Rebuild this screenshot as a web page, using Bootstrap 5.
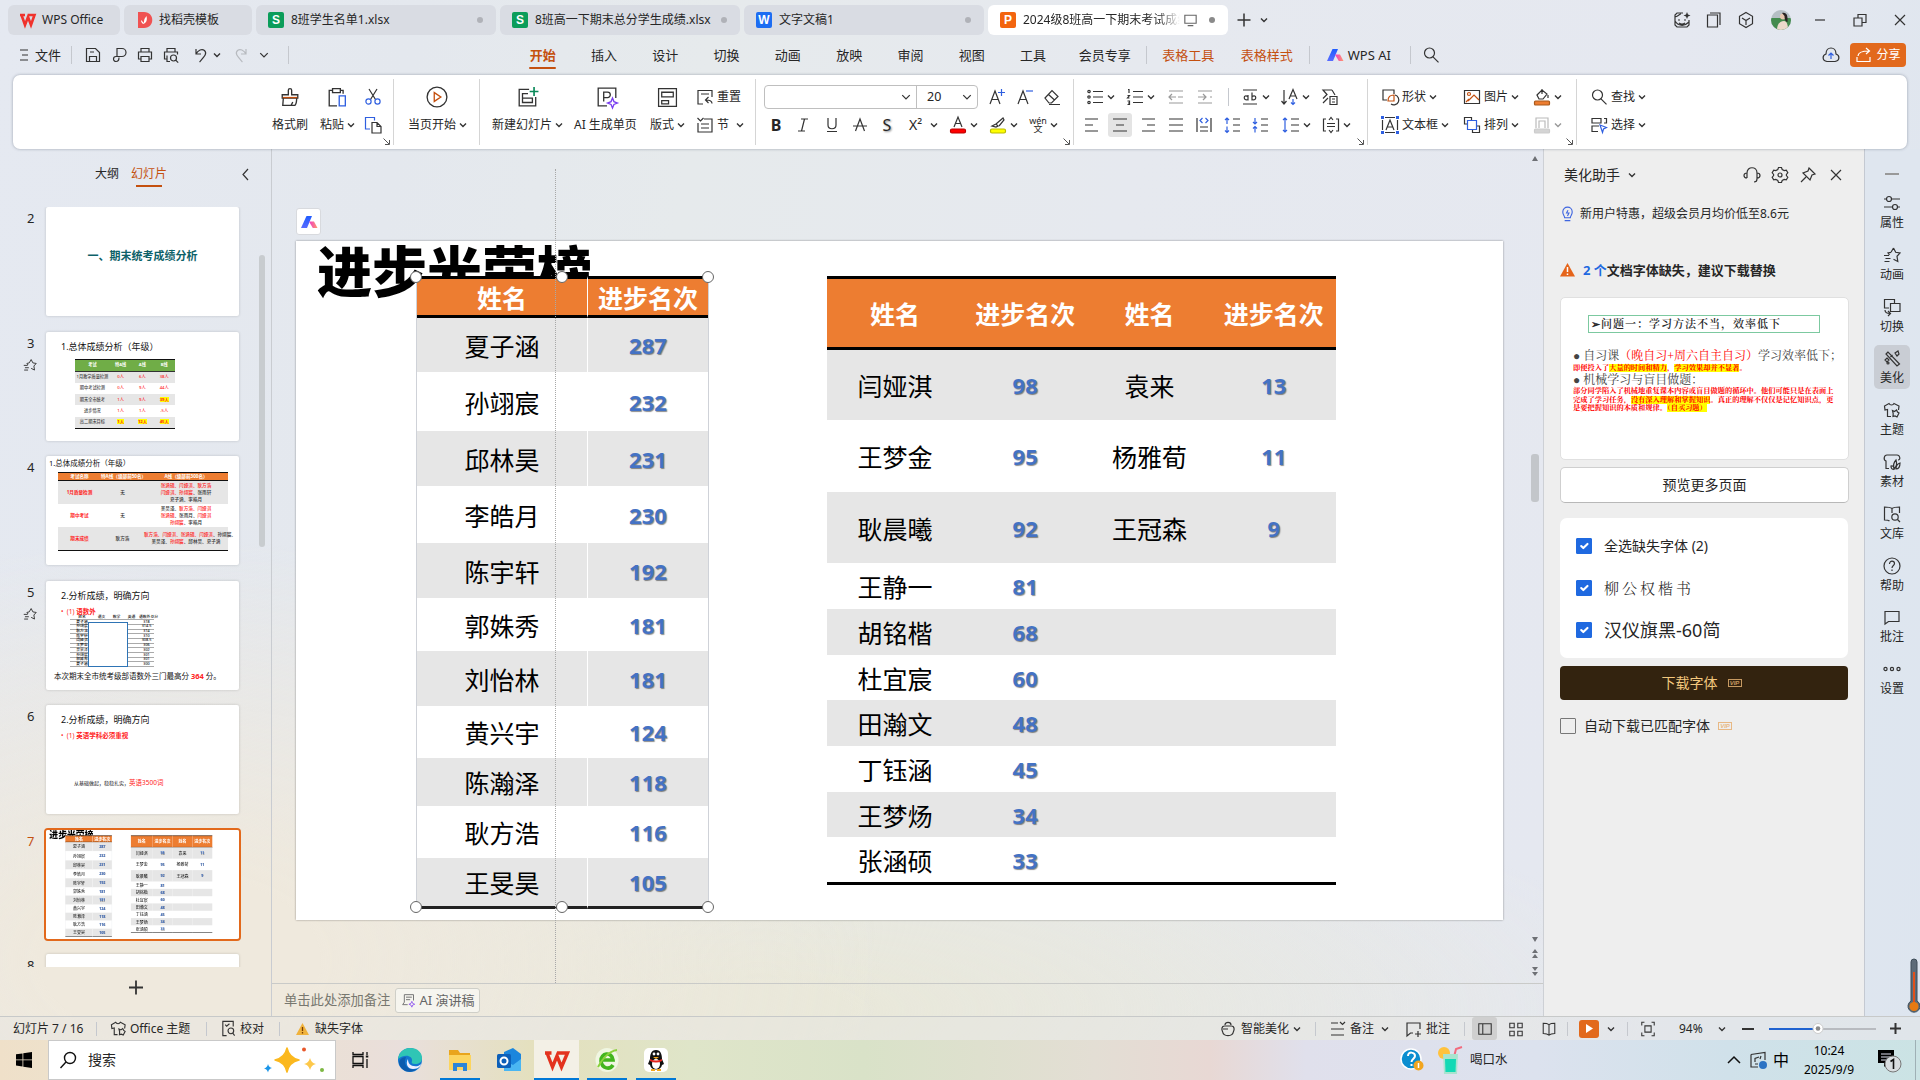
<!DOCTYPE html>
<html lang="zh-CN">
<head>
<meta charset="utf-8">
<title>WPS Office</title>
<link rel="stylesheet" href="https://cdn.jsdelivr.net/npm/bootstrap@5.3.0/dist/css/bootstrap.min.css">
<style>
:root{--acc:#c4500f;--org:#e2691c;--ink:#262626}
html,body{height:100%;overflow:hidden}
body{font:12px/16px "Noto Sans","Noto Sans CJK SC",sans-serif;color:var(--ink);width:1920px;height:1080px;
background:radial-gradient(700px 420px at 180px 960px,#efe9dd 20%,rgba(238,232,220,0) 100%),radial-gradient(900px 260px at 760px 1010px,#e9e8da 10%,rgba(232,232,218,0) 100%),linear-gradient(100deg,#e5e9f1 0,#e4e8ee 20%,#e6eaec 34%,#e6e9ef 55%,#e5e8f0 80%,#dde5ee 100%)}
svg.ic{width:18px;height:18px;fill:none;stroke:#333;stroke-width:1.2;flex:none;display:block;overflow:visible}
svg.ic.s15{width:15px;height:15px}svg.ic.s16{width:16px}svg.ic.s17{width:17px;height:17px}
svg.ic.s20{width:20px;height:20px}svg.ic.s21{width:21px;height:21px}svg.ic.s22{width:22px;height:22px}
svg.chev{width:8px;height:8px;fill:none;stroke:#333;stroke-width:1.4;flex:none;display:block}
svg.chev.big{width:10px;height:10px;stroke-width:1}
.slot{display:flex;align-items:center;justify-content:center;flex:none;white-space:nowrap}
.slot.st{justify-content:flex-start}
.vsep{width:1px;height:18px;background:#c5c8ce;flex:none}
.g3{gap:3px}
.clr-acc{color:var(--acc)}
/* title tabs */
.titlebar{height:40px;padding:5px 0 5px 8px}
.doctab{height:30px;border-radius:6px;background:#d9dce3;padding:0 12px;gap:7px;white-space:nowrap;overflow:hidden;width:240px;flex:none}
.doctab.home{width:112px;gap:5px;padding-left:11px}.doctab.shell{width:128px;padding-left:13px;gap:4px}
.doctab.on{background:#fff}
.doctab .dot{width:6px;height:6px;border-radius:50%;background:#b0b2b8;margin-left:auto;margin-right:1px;flex:none}
.doctab.on .dot{background:#8a8a8a;margin-left:3px}
.doctab .mon{margin-left:-5px;stroke:#666;width:17px}
.fade-end{width:157px;overflow:hidden;flex:none;-webkit-mask-image:linear-gradient(90deg,#000 86%,transparent)}
.appbadge{width:16px;height:16px;border-radius:2px;color:#fff;font:bold 12px/16px "Liberation Sans",sans-serif;text-align:center;flex:none}
.bg-s{background:#0b9d5a}.bg-w{background:#1d6df2}.bg-p{background:#f3650f}
/* menu */
.menubar{height:35px;font-size:13px;padding-bottom:5px}
.file-sep{margin:0 8px 0 9px}
.quick-more{width:28px;margin-right:10px}
.mtabs{margin-left:223px}
.mtab{width:61.3px;position:relative;text-align:center}
.mtab.on{color:var(--acc);font-weight:700}
.mtab.on::after{content:"";position:absolute;left:17px;right:17px;bottom:-6px;height:2px;background:var(--acc);border-radius:1px}
.vip-tab{width:82px}.tool-tab{width:83px}.style-tab{width:74px}
.ai-sep{margin:0 16px 0 5px}.find-sep{margin-left:19px}
.share{width:56px;height:24px;border-radius:4px;background:var(--org);color:#fff;font-size:12px;gap:3px;margin-right:-2px}
.share svg.ic{stroke:#fff}
/* ribbon */
.ribbon{margin:0 13px;height:74px;background:#fff;border-radius:7px;box-shadow:0 0 3px rgba(60,70,90,.45);padding-left:255px;position:relative;z-index:5}
.rgroup{height:66px;margin-top:4px;padding-top:4px;border-right:1px solid #d5d5d5;position:relative;display:flex;flex:none;white-space:nowrap}
.rgroup:last-child{border:0}
.rg-clip{width:126px}.rg-play{width:86px;padding-left:14px}.rg-slide{width:276px;padding-left:12px}.rg-font{width:318px;padding-left:8px}.rg-para{width:294px;padding-left:4px}.rg-draw{width:209px;padding-left:13px}.rg-find{padding-left:13px}
.col44{width:44px}.col-paste{width:48px;padding-left:8px}.col-paste .rrow:first-child{padding-left:7px}
.col82{width:82px}.col76{width:76px}.col46{width:46px}.col70{width:70px}
.in18{padding-left:18px}.in25{padding-left:25px}.in22{padding-left:22px}.in7{padding-left:7px}
.rrow{height:28px;display:flex;align-items:center}
.rgroup .launch{position:absolute;right:3px;bottom:0;width:7px;height:7px;stroke:#555;fill:none;stroke-width:1}
.pairbox{width:40px;display:flex;align-items:center;gap:3px;flex:none}
.pairbox.sup{margin-left:9px}
.glyph{width:18px;font-size:14px}.glyph.py{font-size:9px;line-height:8px;text-align:center}
.shadow-s{font-size:16px;text-shadow:1px 1px 2px #888}
.para-sep{margin:0 12px 0 4px}
.fontbox{width:214px;height:24px;border:1px solid #bfbfbf;border-radius:4px;display:flex;align-items:center;margin-right:5px}
.fontbox>div{height:100%;display:flex;align-items:center;justify-content:flex-end}
.fname{width:152px;padding-right:5px;border-right:1px solid #bfbfbf}
.fontbox>.fsize{width:60px;padding:0 5px 0 10px;justify-content:space-between;font-size:12.5px}
.pressed{background:#e4e4e4;border-radius:3px;width:24px;height:24px}
/* work area */
.work{height:867px}
.slides{width:272px;border-right:1px solid #c9ccd1;position:relative;flex:none}
.ptabs{height:58px;padding:17px 0 0 95px}
.ptabs span{height:16px;flex:none}
.ptabs .ic{margin-left:62px}
.ptabs .cur{color:var(--acc);position:relative}
.ptabs .cur::after{content:"";position:absolute;left:5px;right:5px;bottom:-5px;height:2px;background:var(--acc)}
.tlist{height:760px;overflow:hidden;padding:0 0 0 22px;position:relative}
.trow{display:flex;margin-bottom:15.5px;height:109px}
.tnum{width:24px;font-size:13px;padding:3px 0 0 5px;flex:none}
.tnum svg.ic{margin:7px 0 0 -4px;width:14px;height:14px}
.thumb{width:193px;height:109px;background:#fff;border-radius:2px;box-shadow:0 0 3px rgba(0,0,0,.18);overflow:hidden;position:relative;color:#111}
.thumb.sel{outline:2px solid var(--org);border-radius:2px;box-shadow:none}
.sec-title{font-size:11px;color:#0d6168;padding-bottom:12px}
.thead2{font-size:9px;line-height:12px;padding:9px 0 0 15px;white-space:nowrap}
.thead3{font-size:7.5px;line-height:10px;padding:2px 0 0 3px}
.mini{font-size:4.6px;line-height:6px;text-align:center;font-weight:500;white-space:nowrap}
.mini .r{display:flex;align-items:center}
.mini .r>span{flex:1 1 0;min-width:0}
.mini .r>span:first-child{flex:1.6 1 0}
.mini .r:nth-child(even){background:#e6e6e6}
.m3{width:100px;margin:6px 0 0 29px;border-top:1px solid #111;border-bottom:1px solid #111;font-size:4.2px}
.m3 .r{height:11.3px;color:#f22}
.m3 .r>span:first-child{color:#444}
.m3 .r.h{height:12px;background:#70ad47;border-bottom:1px solid #333}
.m3 .r.h>span,.m4 .r.h>span:first-child{color:#fff;font-weight:700}
.m3 b{background:#ff0}
.mini.m4{width:170px;margin:4px 0 0 12px;border-top:1px solid #111;border-bottom:1px solid #111;line-height:7px}
.m4 .r{height:23px;color:#333}.m4 .r.h{height:7.6px;background:#ed7d31;color:#fff;font-weight:700;border-bottom:1px solid #111}
.mini.m4 .r>span:first-child{flex:43 1 0;color:#f22;font-weight:700}.mini.m4 .r.h>span:first-child{color:#fff}.mini.m4 .r>span:nth-child(2){flex:43 1 0}.mini.m4 .r>span:nth-child(3){flex:84 1 0}
.m4 i,.redt{color:#f22;font-style:normal}
.mini.m5{width:84px;margin:0 0 0 24px;position:relative;font-size:3.8px;line-height:4.7px}
.m5 .r{height:4.7px;border-bottom:.5px solid #aaa}
.mini.m5 .r:nth-child(even){background:none}
.m5 .hide-box{position:absolute;left:18px;top:6px;width:40px;height:45px;background:#fff;border:1px solid #2e74b5}
.bullet1{font-size:6.5px;line-height:9px;padding:5px 0 0 15px}
.sline{font-size:7.5px;line-height:12px;white-space:nowrap;padding:3px 0 0 8px}
.basics{font-size:5px;padding:35px 0 0 28px}.basics .redt{font-size:6.5px}
.pscroll{position:absolute;left:259px;top:48px;width:6px;height:292px;border-radius:3px;background:#c8cccf}
.canvas{width:1271px;position:relative;flex:none}
.stage{height:834px;position:relative}
.aibtn{position:absolute;left:24px;top:59px;width:25px;height:27px;background:#fff;border:1px solid #d8dade;border-radius:3px;display:flex;align-items:center;justify-content:center}
.slidepage{position:absolute;left:24px;top:92px;width:1207px;height:679px;background:#fff;box-shadow:0 0 2px rgba(0,0,0,.4)}
.slidebody{width:1207px;height:679px;position:relative;background:#fff}
.bigtitle{position:absolute;left:21px;top:-7px;font-size:55px;line-height:68px;font-weight:900;font-family:"Noto Sans CJK SC",sans-serif;color:#000;white-space:nowrap}
.gtable{position:absolute;border-collapse:separate;border-spacing:0;table-layout:fixed;font-size:25px;line-height:30px;color:#000;text-align:center;font-family:"Noto Sans CJK SC",sans-serif}
.gtable td,.gtable th{padding:0;vertical-align:middle}
.gtable th{background:#ed7d31;color:#fff;font-weight:700;border-top:3px solid #000;border-bottom:3px solid #000}
.gtable tbody tr:nth-child(odd) td{background:#e6e6e6}
.gtable .num{font:700 22px/26px "Noto Sans",sans-serif;color:#4472c4;text-shadow:1px 1px 1px rgba(0,0,0,.45)}
.gtable.t1{left:120px;top:35px;width:293px;border-left:1px solid #cfd2d8;border-right:1px solid #cfd2d8;background:#fff}
.t1 thead tr{height:42px}.t1 th:first-child{width:170px}
.t2 thead tr{height:74px}.t2 th:first-child{width:136px}
.gtable.t1 .num,.gtable.t1 th+th{border-left:1px solid #fff}
.gtable.t1 tr td{border-bottom:1px solid #fff}
.gtable.t1 tbody tr:last-child td{border-bottom:3px solid #222}
.gtable.t2{left:531px;top:35px;width:509px}
.gtable.t2 tbody tr:last-child td{border-bottom:3px solid #000}
.guide{position:absolute;left:283px;top:20px;bottom:0;width:0;border-left:1px dotted #a8a8a8}
.knob{position:absolute;width:12px;height:12px;margin:-6px 0 0 -6px;border:1px solid #666;border-radius:50%;background:#fff}
.k1{left:144px;top:128px}.k2{left:290px;top:128px}.k3{left:436px;top:128px}.k4{left:144px;top:758px}.k5{left:290px;top:758px}.k6{left:436px;top:758px}
.cscroll{position:absolute;right:2px;top:1px;width:12px;height:833px}
.cscroll svg{width:12px;height:833px;fill:#6e7075;display:block}
.notes{height:33px;border-top:1px solid #c9cac8;padding-left:12px;color:#77776f;font-size:13.3px}
.aispeech{border:1px solid #cfcfc8;border-radius:3px;background:#f6f5ef;width:85px;height:25px;gap:3px;margin-left:5px;padding-left:5px;color:#666;font-size:13px}
.aispeech svg.ic{stroke:#777}
/* right panel */
.assist{width:322px;background:#eee;border-left:1px solid #cdd0d5;border-right:1px solid #c4c9d2;padding:1px 14px 0 16px;flex:none}
.ahead{height:50px;font-size:14px;padding-left:4px}
.tip{height:28px;gap:4px}
.tip svg.ic{stroke:#3f66e0;margin-left:-1px;width:17px}
.warnline{height:69px;padding-top:14px;gap:8px;font-size:13px}
.blue{color:#1f69e0}
.pv{height:163px;width:289px;border:1px solid #e0e0e0;border-radius:5px;background:#fff;font-family:"Liberation Serif","Noto Serif CJK SC","Noto Sans CJK SC",serif;padding:17px 0 0 12px;white-space:nowrap;overflow:hidden}
.pv .q{border:1px solid #7cc9a0;width:232px;height:18px;margin-left:15px;font-size:11px;line-height:16px;padding-left:2px;font-weight:600;letter-spacing:1px;margin-bottom:17px}
.pv .b{font-size:12px;line-height:13px;color:#444}
.pv .b em{font-style:normal;color:#f00}
.pv .p{font-size:7.24px;line-height:8.7px;color:#f00;font-weight:700}
.pv .p u{background:#ff0;text-decoration:none}
.pv .p.one{line-height:11px}
.morebtn{width:289px;height:36px;margin-top:7px;background:#fff;border:1px solid #cfcfcf;border-bottom-color:#b8b8b8;border-radius:5px;font-size:14px}
.fontcard{width:288px;height:140px;border-radius:7px;background:#fff;margin-top:15px;padding:7px 16px}
.fontcard .fr{height:42px;display:flex;align-items:center;gap:12px;font-size:14px}
.fontcard .kai{font-family:"AR PL UKai CN","Noto Serif CJK SC","Noto Sans CJK SC",serif;font-size:15px;letter-spacing:3px;font-weight:300}
.fontcard .fr.hei{font-size:18px}
.form-check-input.ck{width:16px;height:16px;margin:0;border-radius:1px;border-color:#777;flex:none;background-color:transparent}
.form-check-input.ck:checked{background-color:#1f69e0;border-color:#1f69e0}
.dlbtn{width:288px;height:34px;margin-top:8px;border-radius:4px;background:#33230f;color:#f3c87e;font-size:14px;gap:10px;padding-right:5px}
.autodl{margin-top:18px;gap:8px;font-size:14px}
.viptag{border:1px solid currentColor;font:italic bold 6px/6px "Liberation Sans",sans-serif;width:14px;height:8px;text-align:center;color:#c79a62}
.autodl .viptag{color:#e8b883}
.rail{width:56px;background:rgba(222,229,240,.5)}
.railtop{height:41px;padding:8px 2px 0 0}
.railitem{width:36px;height:44px;margin:0 auto 7.8px 9px;border-radius:5px;display:flex;flex-direction:column;align-items:center;gap:3px;padding-top:4px;line-height:15px;white-space:nowrap}
.railitem.on{background:#c9cdd4}
.thermo{position:absolute;left:1905px;top:957px;width:16px;height:57px}
/* status */
.statusb{height:24px;border-top:1px solid #c7c9c9;background:rgba(230,230,226,.35)}
.statusb .vsep{height:14px}
.sb-page{width:96px;padding-left:13px}.sb-theme{width:109px;padding-left:13px;gap:3px}.sb-proof{width:72px;padding-left:13px;gap:3px}.sb-miss{padding-left:16px;gap:6px}
.sb-right{width:701px}
.sb-smart{width:96px;gap:4px}.sb-notes{width:89px;padding-left:13px;gap:3px}.sb-cmt{width:59px;gap:3px}
.sb-view{width:25px;height:23px;background:#cfcfcf;border-radius:3px;margin-left:7px}
.sb-play{width:20px;height:18px;background:#e2691c;border-radius:3px;margin-left:11px}
.sb-fitsep{margin-left:12px}.sb-pct{width:50px;padding-left:11px}.sb-minus{width:43px}
.taskbar{height:40px;background:linear-gradient(90deg,#efe0c9 0,#ece3d0 8%,#eadfd8 19%,#e9dfdc 21%,#e4e0bd 28%,#dfe5c9 36%,#d9e2c8 45%,#e3ded4 57%,#e8d8d4 63%,#e0e0ec 68%,#dce2ee 80%,#d0e1ea 90%,#cbe3e4 100%)}
.searchbox{width:288px;height:40px;background:#fff;border:1px solid #c9c9c9;font-size:14px;padding-left:10px}
.searchbox svg.ic{stroke-width:1.4;stroke:#111}
.searchbox span{margin-left:11px}
.spark{margin-left:147px}
.tb{width:49px;height:40px;display:flex;align-items:center;justify-content:center;position:relative;flex:none}
.tb.edge{width:50px}
.tb.run::after{content:"";position:absolute;left:5px;right:4px;bottom:0;height:2px;background:#0078d7}
.tb.cur2{background:#f3f0e6;width:45px;margin:0 3px 0 1px}.tb.cur2::after{left:0;right:0}
.tb svg{width:26px;height:26px;display:block}
.tb svg.tview{width:18px;height:18px;fill:none;stroke:#111;stroke-width:1.3}
.tray{width:520px}
.drink{margin-left:13px}.drink-t{margin-left:7px;font-size:12.5px}
.ime{margin-left:6px;stroke:#111}.ime-zh{font-size:16px;margin-left:6px;color:#000}
.clock{width:80px;line-height:19px;color:#000}
.notif{margin:0 10px 0 8px}
.peek{width:5px;height:40px;border-left:1px solid #9fb0b5}
.w18{width:18px}.w20{width:20px}.w24{width:24px}.w26{width:26px}.w28{width:28px}.w30{width:30px}.w32{width:32px}.w38{width:38px}.w40{width:40px}.w48{width:48px}
</style>
<script src="https://cdn.jsdelivr.net/npm/bootstrap@5.3.0/dist/js/bootstrap.bundle.min.js"></script>
</head>
<body>
<svg width="0" height="0" class="position-absolute">
<defs><linearGradient id="ga" x1="0" y1="0" x2="0" y2="1"><stop offset="0" stop-color="#1e5cff"/><stop offset="1" stop-color="#5a6cff"/></linearGradient><linearGradient id="gb"><stop offset="0" stop-color="#f038c8"/><stop offset="1" stop-color="#ff9a6a"/></linearGradient></defs>
<symbol id="cv" viewBox="0 0 8 8"><path d="M1 2.500L4 5.500 7 2.500"/></symbol>
<symbol id="wpsai" viewBox="0 0 18 18"><path d="M6.500 3h5.500L7 15H1z" fill="url(#ga)" stroke="none"/><path d="M9 8.500h5l3.500 6.500h-4.700z" fill="url(#gb)" stroke="none"/></symbol>
<symbol id="save" viewBox="0 0 18 18"><path d="M2.500 2.500h9l4 4v9h-13zM5.500 15.500v-5h7v5M6 6h4"/></symbol>
<symbol id="pdf" viewBox="0 0 18 18"><path d="M7 11V2.500h5a3.500 3.500 0 010 8H6a2.300 2.300 0 100 5c2 0 3-1.500 3-4"/></symbol>
<symbol id="print" viewBox="0 0 18 18"><path d="M5 6V2.500h8V6M5 13H2.500V6h13v7H13M5 10.500h8v5H5z"/></symbol>
<symbol id="preview" viewBox="0 0 18 18"><path d="M5 6V2.500h8V6M5 13H2.500V6h13v2.500M5 9.500v6h3"/><circle cx="11.500" cy="12" r="3"/><path d="M13.700 14.200l2.500 2.500"/></symbol>
<symbol id="undo" viewBox="0 0 18 18"><path d="M4 3v5h5M4 8c2-4 6-5.500 8.500-3.500 3 3 0 6-5 11.500"/></symbol>
<symbol id="redo" viewBox="0 0 18 18"><path d="M14 3v5H9M14 8c-2-4-6-5.500-8.500-3.500-3 3 0 6 5 11.500"/></symbol>
<symbol id="find" viewBox="0 0 18 18"><circle cx="7.500" cy="7" r="5"/><path d="M11 10.800l5.500 5.500"/></symbol>
<symbol id="shirt" viewBox="0 0 18 18"><path d="M8 15.500H4.500v-7l-2.500.5-.500-4 4.500-2.500c1 2 4 2 5 0l5 2.500-.500 4"/><path d="M9.500 9.500l2 1 2-1.500 1 2 1.500 1-1 2-1 2-2-1-2 .5.200-3z"/></symbol>
<symbol id="star" viewBox="0 0 18 18"><path d="M10.500 2l2.200 4.300 4.300.7-3 3.300.8 5.200-4.300-2.200M8 6.300L5 7l1.500 2M8 6.300L10.500 2M1 9.500h5M2.500 12.500h5M1.500 15.500h5"/></symbol>
<symbol id="comment" viewBox="0 0 18 18"><path d="M2 3.500h14v10H5.500L2 16z"/></symbol>
<symbol id="go" viewBox="0 0 7 7"><path d="M.500 .500L6 6M2 6.500h4.500V2"/></symbol>
</svg>

<header>
<div class="titlebar d-flex gap-1">
 <div class="doctab home d-flex align-items-center"><svg class="ic" viewBox="0 0 18 18"><path d="M1 4h5M2.500 4l3.500 10 3-8 3 8 3.500-10H9" stroke="#f0322c" stroke-width="2.600"/></svg>WPS Office</div>
 <div class="doctab shell d-flex align-items-center"><svg class="ic" viewBox="0 0 18 18"><path d="M1 1h6c11 0 11 16 0 16H1z" fill="#f05252" stroke="none"/><path d="M6 13c-2-2-2-3-2-4l3 3c0-4 1-5 2.500-7 1 4 0 7-3.500 8z" fill="#fff" stroke="none"/></svg><span>找稻壳模板</span></div>
 <div class="doctab d-flex align-items-center"><span class="appbadge bg-s">S</span>8班学生名单1.xlsx<i class="dot"></i></div>
 <div class="doctab d-flex align-items-center"><span class="appbadge bg-s">S</span>8班高一下期末总分学生成绩.xlsx<i class="dot"></i></div>
 <div class="doctab d-flex align-items-center"><span class="appbadge bg-w">W</span>文字文稿1<i class="dot"></i></div>
 <div class="doctab on d-flex align-items-center"><span class="appbadge bg-p">P</span><span class="fade-end">2024级8班高一下期末考试成绩</span><svg class="ic mon" viewBox="0 0 18 18"><path d="M3 4h12v8.500H3zM6 15h6" stroke="#666"/></svg><i class="dot"></i></div>
 <div class="slot w24"><svg class="ic" viewBox="0 0 18 18"><path d="M9 2.500v13M2.500 9h13" stroke-width="1.500"/></svg></div>
 <svg class="chev align-self-center"><use href="#cv"/></svg>
 <div class="d-flex align-items-center ms-auto">
  <div class="slot w32"><svg class="ic" viewBox="0 0 18 18"><path d="M10 2H4L2 4v10l2 2h10l2-2V9M2 6c4-1 4-3 6-3M5 9h2M11 9h2M6 12c2 1.500 4 1.500 6 0M2 10c3 5 9 6 14 1"/><path d="M14 1l1 2.500 2.500 1L15 5.500 14 8l-1-2.500-2.500-1L13 3.500z" fill="#333" stroke="none"/></svg></div>
  <div class="slot w32"><svg class="ic" viewBox="0 0 18 18"><path d="M2.500 4h10v12h-10zM5 2h10v12"/></svg></div>
  <div class="slot w32"><svg class="ic" viewBox="0 0 18 18"><path d="M9 1.500l6.500 3.800v7.400L9 16.500l-6.500-3.800V5.300zM5 7l4 2.500L13 7M9 9.500V14"/></svg></div>
  <div class="slot w38"><svg width="20" height="20" viewBox="0 0 20 20"><clipPath id="av"><circle cx="10" cy="10" r="10"/></clipPath><g clip-path="url(#av)"><path fill="#b5bfc4" d="M0 0h20v20H0z"/><path fill="#438b4d" d="M0 8h20v12H0z"/><path fill="#ecd9cb" d="M6 20c0-6 3-9 7-9 3 0 4 4 4 9z"/><circle cx="12" cy="6.500" r="3" fill="#e6c6ae"/><path fill="#2a2423" d="M11 3c5-1 6 3 5.500 9-2 0-3-3-3-6z"/></g></svg></div>
  <div class="slot w40"><svg class="ic" viewBox="0 0 18 18"><path d="M4 9h10"/></svg></div>
  <div class="slot w40"><svg class="ic" viewBox="0 0 18 18"><path d="M3 7h8v8H3zM7 7V3.500h8v8h-4"/></svg></div>
  <div class="slot w40"><svg class="ic" viewBox="0 0 18 18"><path d="M4 4l10 10M14 4L4 14"/></svg></div>
 </div>
</div>

<div class="menubar d-flex align-items-center">
 <div class="slot w18 ms-3"><svg class="ic" viewBox="0 0 18 18"><path d="M4 4h8M6 9h6M4 14h8"/></svg></div>
 <div class="slot w28">文件</div>
 <div class="vsep file-sep"></div>
 <div class="slot w26"><svg class="ic"><use href="#save"/></svg></div><div class="slot w26"><svg class="ic"><use href="#pdf"/></svg></div><div class="slot w26"><svg class="ic"><use href="#print"/></svg></div><div class="slot w26"><svg class="ic"><use href="#preview"/></svg></div>
 <div class="pairbox ms-2"><svg class="ic"><use href="#undo"/></svg><svg class="chev"><use href="#cv"/></svg></div>
 <div class="slot w18"><svg class="ic opacity-25"><use href="#redo"/></svg></div>
 <div class="slot quick-more"><svg class="chev big"><use href="#cv"/></svg></div><div class="vsep"></div>
 <div class="d-flex mtabs"><div class="mtab on">开始</div><div class="mtab">插入</div><div class="mtab">设计</div><div class="mtab">切换</div><div class="mtab">动画</div><div class="mtab">放映</div><div class="mtab">审阅</div><div class="mtab">视图</div><div class="mtab">工具</div></div>
 <div class="slot vip-tab">会员专享</div><div class="vsep"></div>
 <div class="slot tool-tab clr-acc">表格工具</div><div class="slot style-tab clr-acc">表格样式</div><div class="vsep ai-sep"></div>
 <svg class="ic"><use href="#wpsai"/></svg><span class="ms-1 text-nowrap">WPS AI</span><div class="vsep find-sep"></div>
 <div class="slot w40"><svg class="ic"><use href="#find"/></svg></div>
 <div class="d-flex align-items-center ms-auto me-3">
  <div class="slot w38"><svg class="ic" viewBox="0 0 18 18"><path d="M5 15.500c-5-1-5-6-1-7.500C4 0 14 0 14 8c4 1.500 4 6.500-1 7.500z"/><path d="M9 13V7M6.500 9.500L9 7l2.500 2.500" stroke="#2f5fe0"/></svg></div>
  <div class="share d-flex align-items-center justify-content-center"><svg class="ic" viewBox="0 0 18 18"><path d="M3 10c0-4 4-5 11-5M11 2l3.500 3L11 8M2 11v4.500h13V11"/></svg>分享</div>
 </div>
</div>

<div class="ribbon d-flex">
 <div class="rgroup rg-clip">
  <div class="col44"><div class="rrow justify-content-center"><svg class="ic s20" viewBox="0 0 18 18"><path d="M7.500 7V3a1.500 1.500 0 013 0v4H16v3H2V7zM3 10l-.500 6.500h11c1-1 1.500-3 1.500-6.500M10 16.500l1.500-3"/><path d="M2.500 9.500h13" stroke="#c4500f"/></svg></div><div class="rrow justify-content-center">格式刷</div></div>
  <div class="col-paste"><div class="rrow"><svg class="ic s20" viewBox="0 0 18 18"><path d="M5 3H2v14h7M12 3h2.500v3M5 1.500h7V5H5z"/><path d="M11 8h5.500v9H11z" stroke="#2f5fe0"/></svg></div><div class="rrow g3">粘贴<svg class="chev"><use href="#cv"/></svg></div></div>
  <div class="w26 ps-1"><div class="rrow"><svg class="ic" viewBox="0 0 18 18"><path d="M5 1l6.500 10.500M13 1L6.500 11.500"/><circle cx="4.500" cy="13.500" r="2.600" stroke="#2f5fe0"/><circle cx="13.500" cy="13.500" r="2.600" stroke="#2f5fe0"/></svg></div><div class="rrow"><svg class="ic" viewBox="0 0 18 18"><path d="M6 13H1.500V1.500h9v3" stroke="#2f5fe0"/><path d="M8 6.500h5l4 4V17H8zM13 6.500v4h4"/></svg></div></div>
  <svg class="launch"><use href="#go"/></svg>
 </div>
 <div class="rgroup rg-play"><div><div class="rrow in18"><svg class="ic s22" viewBox="0 0 20 20"><circle cx="10" cy="10" r="9"/><path d="M7.500 6v8l6-4z" stroke="#c4500f"/></svg></div><div class="rrow g3">当页开始<svg class="chev"><use href="#cv"/></svg></div></div></div>
 <div class="rgroup rg-slide">
  <div class="col82"><div class="rrow in25"><svg class="ic s22" viewBox="0 0 20 20"><path d="M11 3H2v15h15v-8M10 7H5v4M5 11h9v4H5z"/><path d="M15.500 1v8M11.500 5h8" stroke="#0b8a5a" stroke-width="1.500"/></svg></div><div class="rrow g3">新建幻灯片<svg class="chev"><use href="#cv"/></svg></div></div>
  <div class="col76"><div class="rrow in22"><svg class="ic s22" viewBox="0 0 20 20"><path d="M10 18H2V2h16v9M7 14V5.500h3.500a2.500 2.500 0 010 5H7"/><path d="M15 11l1.300 3.200L19.500 15.500l-3.200 1.300L15 20l-1.300-3.200-3.200-1.300 3.200-1.300z" stroke="#7a3ff0"/></svg></div><div class="rrow">AI 生成单页</div></div>
  <div class="col46"><div class="rrow in7"><svg class="ic s21" viewBox="0 0 20 20"><path d="M1.500 1.500h17v17h-17zM4.500 5h11v4.500h-11zM4.500 13h6.500v3H4.500z"/></svg></div><div class="rrow g3">版式<svg class="chev"><use href="#cv"/></svg></div></div>
  <div><div class="rrow g3"><svg class="ic" viewBox="0 0 18 18"><path d="M7 16H2V2.500h14V9M5 6h8M16 15.500c0-3-3-3.500-6-3.500M12.500 9l-3 3 3 3"/></svg>重置</div><div class="rrow g3"><svg class="ic" viewBox="0 0 18 18"><path d="M8 3h8v13H2V7M1.500 2l3 3 3-3M5 8h8M5 12h8"/></svg>节<svg class="chev ms-1"><use href="#cv"/></svg></div></div>
 </div>
 <div class="rgroup rg-font"><div>
  <div class="rrow"><div class="fontbox"><div class="fname"><svg class="chev big"><use href="#cv"/></svg></div><div class="fsize"><span>20</span><svg class="chev big"><use href="#cv"/></svg></div></div>
   <div class="slot w28"><svg class="ic" viewBox="0 0 18 18"><path d="M2 16L7 3l5 13M3.800 11.500h6.500"/><path d="M13.500 1v7M10 4.500h7" stroke="#2f5fe0"/></svg></div><div class="slot w28"><svg class="ic" viewBox="0 0 18 18"><path d="M2 16L7 3l5 13M3.800 11.500h6.500"/><path d="M10 3h7" stroke="#2f5fe0"/></svg></div><div class="slot w26"><svg class="ic" viewBox="0 0 18 18"><path d="M2 10l7-7.500 6 6L8.500 15H6zM5.500 6.500l6 5.500M6 16.500h11"/></svg></div></div>
  <div class="rrow"><div class="slot w24 fw-bold fs-6">B</div><div class="slot w30"><svg class="ic" viewBox="0 0 18 18"><path d="M7 3h7M4 15h7M10.500 3l-3 12"/></svg></div><div class="slot w28"><svg class="ic" viewBox="0 0 18 18"><path d="M5 2v7c0 5 8 5 8 0V2M4 15.500h10"/></svg></div><div class="slot w28"><svg class="ic" viewBox="0 0 18 18"><path d="M4.500 15L9 3l4.500 12M2 10h14"/></svg></div><div class="slot w26 shadow-s">S</div>
   <div class="pairbox sup"><span class="glyph">X²</span><svg class="chev"><use href="#cv"/></svg></div>
   <div class="pairbox"><svg class="ic" viewBox="0 0 18 18"><path d="M5 11L9 1l4 10M6.500 7.500h5"/><rect x="1.500" y="13" width="15" height="4" rx="1.500" fill="#f00" stroke="#b00"/></svg><svg class="chev"><use href="#cv"/></svg></div>
   <div class="pairbox"><svg class="ic" viewBox="0 0 18 18"><path d="M3 10l4-2 2 2-2 1zM7 8l7-6 1 2-5 6"/><rect x="1.500" y="13" width="15" height="4" rx="1.500" fill="#ff0" stroke="#bb0"/></svg><svg class="chev"><use href="#cv"/></svg></div>
   <div class="pairbox"><span class="glyph py">wén<br>文</span><svg class="chev"><use href="#cv"/></svg></div></div>
 </div><svg class="launch"><use href="#go"/></svg></div>
 <div class="rgroup rg-para"><div>
  <div class="rrow ps-2"><div class="pairbox"><svg class="ic" viewBox="0 0 18 18"><path d="M7 3.500h10M7 9h10M7 14.500h10"/><circle cx="3" cy="3.500" r="1.200"/><circle cx="3" cy="9" r="1.200"/><circle cx="3" cy="14.500" r="1.200"/></svg><svg class="chev"><use href="#cv"/></svg></div>
   <div class="pairbox"><svg class="ic" viewBox="0 0 18 18"><path d="M7 3.500h10M7 9h10M7 14.500h10M2 1.500h1v3.500M1.500 7.500h2L1.500 10h2M1.500 13h2v3.500h-2M2 15h1.500"/></svg><svg class="chev"><use href="#cv"/></svg></div>
   <div class="slot w20"><svg class="ic opacity-50" viewBox="0 0 18 18"><path d="M2 3h14M11 9h5M2 15h14M9 9H2M5 6L2 9l3 3"/></svg></div><div class="slot w38"><svg class="ic opacity-50" viewBox="0 0 18 18"><path d="M2 3h14M14 9h2M2 15h14M2 9h8M7 6l3 3-3 3"/></svg></div><div class="vsep para-sep"></div>
   <div class="pairbox"><svg class="ic" viewBox="0 0 18 18"><path d="M2 2h14M2 16h14"/><path d="M7 7v5.500M7 8.500c-5-3-5 5 0 3M11 4.500v8M11 8.500c5-3 5 5 0 3"/></svg><svg class="chev"><use href="#cv"/></svg></div>
   <div class="pairbox"><svg class="ic" viewBox="0 0 18 18"><path d="M3 2v14M.500 13L3 16l2.500-3M8 11l4-9.500L16 11M9.500 8h5"/><path d="M12 11v5.500M10 14.500l2 2 2-2" stroke="#2f5fe0"/></svg><svg class="chev"><use href="#cv"/></svg></div>
   <svg class="ic" viewBox="0 0 18 18"><path d="M7 10L2 15M11 2H2l4 4.500-4 4M11 2l3 5M9 8.500h7v8H9zM11 11h3M11 14h3"/></svg></div>
  <div class="rrow"><div class="slot w28"><svg class="ic" viewBox="0 0 18 18"><path d="M2 3h13M2 9h8M2 15h13"/></svg></div><div class="slot w28"><div class="slot pressed"><svg class="ic" viewBox="0 0 18 18"><path d="M2 3h14M5 9h8M2 15h14"/></svg></div></div><div class="slot w28"><svg class="ic" viewBox="0 0 18 18"><path d="M3 3h13M8 9h8M3 15h13"/></svg></div><div class="slot w28"><svg class="ic" viewBox="0 0 18 18"><path d="M2 3h14M2 9h14M2 15h14"/></svg></div><div class="slot w28"><svg class="ic" viewBox="0 0 18 18"><path d="M2 2v14M16 2v14M5 11h8M5 15h8"/><path d="M7.500 2L5 4.500 7.500 7M10.500 2L13 4.500 10.500 7" stroke="#2f5fe0"/></svg></div><div class="slot w28"><svg class="ic" viewBox="0 0 18 18"><path d="M10 3h7M10 9h7M10 15h7"/><path d="M4 8V2M2 4l2-2 2 2M4 10.500v6M2 14.500l2 2 2-2" stroke="#2f5fe0"/></svg></div><div class="slot w28"><svg class="ic" viewBox="0 0 18 18"><path d="M10 3h7M10 9h7M10 15h7"/><path d="M4 2v6M2 6l2 2 2-2M4 16.500v-6M2 12.500l2-2 2 2" stroke="#2f5fe0"/></svg></div>
   <div class="pairbox ms-2"><svg class="ic" viewBox="0 0 18 18"><path d="M9 3h8M9 9h8M9 15h8"/><path d="M3 2v14M1 4l2-2 2 2M1 14l2 2 2-2" stroke="#2f5fe0"/></svg><svg class="chev"><use href="#cv"/></svg></div><div class="pairbox"><svg class="ic" viewBox="0 0 18 18"><path d="M4 3H1.500v12H4M14 3h2.500v12H14M5 7.500h8M5 10.500h8M7 4l2-2.500L11 4M7 14l2 2.500 2-2.500"/></svg><svg class="chev"><use href="#cv"/></svg></div></div>
 </div><svg class="launch"><use href="#go"/></svg></div>
 <div class="rgroup rg-draw">
  <div class="col82"><div class="rrow g3"><svg class="ic" viewBox="0 0 18 18"><path d="M6 12H2V2h11v4M10 16a5 5 0 104-9"/><path d="M7 13c0-4 2-6 6-6v6z" stroke="#c4500f"/></svg>形状<svg class="chev"><use href="#cv"/></svg></div><div class="rrow g3"><svg class="ic" viewBox="0 0 18 18"><path d="M4 1.500h10M4 16.500h10M1.500 4v10M16.500 4v10M5 14l4-10 4 10M6.500 11h5"/><path d="M0 1.500h3M15 1.500h3M0 16.500h3M15 16.500h3" stroke="#2f5fe0" stroke-width="3"/></svg>文本框<svg class="chev"><use href="#cv"/></svg></div></div>
  <div class="col70"><div class="rrow g3"><svg class="ic" viewBox="0 0 18 18"><path d="M1.500 2.500h15v13h-15z"/><path d="M5 13l6-6 5 5M3 14l3-3" stroke="#c4500f"/><circle cx="6" cy="6" r="1.500" stroke="#c4500f"/></svg>图片<svg class="chev"><use href="#cv"/></svg></div><div class="rrow g3"><svg class="ic" viewBox="0 0 18 18"><path d="M4 8H1.500V1.500h7V4M14 10h2.500v6.500h-7V14"/><path d="M4.500 4.500h9v9h-9z" stroke="#2f5fe0"/></svg>排列<svg class="chev"><use href="#cv"/></svg></div></div>
  <div><div class="rrow pairbox"><svg class="ic" viewBox="0 0 18 18"><path d="M4 7l5-5 5 4-4 5H6zM9 1v5M15 7v3"/><rect x="1.500" y="13" width="15" height="4" rx="1" fill="#ed7d31" stroke="#a85a1c"/></svg><svg class="chev"><use href="#cv"/></svg></div><div class="rrow pairbox opacity-50"><svg class="ic" viewBox="0 0 18 18"><path d="M3 12V2h12v10M6 12V5h6v7" stroke="#777"/><rect x="1.500" y="13" width="15" height="4" rx="1" fill="#aaa" stroke="#999"/></svg><svg class="chev"><use href="#cv"/></svg></div></div>
  <svg class="launch"><use href="#go"/></svg>
 </div>
 <div class="rgroup rg-find"><div><div class="rrow g3"><svg class="ic"><use href="#find"/></svg>查找<svg class="chev"><use href="#cv"/></svg></div><div class="rrow g3"><svg class="ic" viewBox="0 0 18 18"><path d="M2 2.500h9v4.500H2zM14 2.500h2.500V7H14M8 15.500H2V10h7"/><path d="M10 9l6.500 2.500-3 1.500-1 3.500z" stroke="#2f5fe0"/></svg>选择<svg class="chev"><use href="#cv"/></svg></div></div></div>
</div>
</header>

<main class="work d-flex">
<aside class="slides">
 <div class="ptabs d-flex gap-2"><span>大纲</span><span class="cur ms-1">幻灯片</span><svg class="ic" viewBox="0 0 18 18"><path d="M11 3L6 8.500l5 5.500"/></svg></div>
 <div class="tlist">
  <div class="trow"><div class="tnum">2</div><div class="thumb sec-title d-flex align-items-center justify-content-center fw-bold">一、期末统考成绩分析</div></div>
  <div class="trow"><div class="tnum">3<svg class="ic"><use href="#star"/></svg></div><div class="thumb"><div class="thead2">1.总体成绩分析（年级）</div>
   <div class="mini m3"><div class="r h"><span>考试</span><span>特A线</span><span>A线</span><span>B线</span></div><div class="r"><span>1月教学质量检测</span><span>0人</span><span>6人</span><span>38人</span></div><div class="r"><span>期中考试检测</span><span>0人</span><span>9人</span><span>44人</span></div><div class="r"><span>期末全市统考</span><span>1人</span><span>9人</span><span><b>39人</b></span></div><div class="r"><span>进步情况</span><span>1人</span><span>1人</span><span>-5人</span></div><div class="r"><span>高二期末目标</span><span><b>1人</b></span><span><b>12人</b></span><span><b>45人</b></span></div></div></div></div>
  <div class="trow"><div class="tnum">4</div><div class="thumb"><div class="thead3">1.总体成绩分析（年级）</div>
   <div class="mini m4"><div class="r h"><span>考试名称</span><span>特A线（级部前50名）</span><span>A线（级部前300名）</span></div><div class="r"><span>1月质量检测</span><span>无</span><span><i>张涵硕、闫娅淇、耿方浩</i><br><i>闫娅淇、孙翊宸</i>、张雨轩<br>夏子涵、李皓月</span></div><div class="r"><span>期中考试</span><span>无</span><span>吴昊泽、<i>耿方浩、闫娅淇</i><br><i>张涵硕</i>、张雨月、<i>闫娅淇</i><br><i>孙翊宸</i>、李皓月</span></div><div class="r"><span>期末成绩</span><span>耿方浩</span><span><i>耿方浩、闫娅淇、张涵硕、闫娅淇</i>、孙翊宸、<br>吴昊泽、<i>孙翊宸</i>、邱林昊、夏子涵</span></div></div></div></div>
  <div class="trow"><div class="tnum">5<svg class="ic"><use href="#star"/></svg></div><div class="thumb"><div class="thead2">2.分析成绩，明确方向</div><div class="bullet1 redt">•&nbsp;&nbsp;(1) <b>语数外</b></div>
   <div class="mini m5" id="m5"><i class="hide-box"></i></div><div class="sline">本次期末全市统考级部语数外三门最高分 <b class="redt">364</b> 分。</div></div></div>
  <div class="trow"><div class="tnum">6</div><div class="thumb"><div class="thead2">2.分析成绩，明确方向</div><div class="bullet1 redt">•&nbsp;&nbsp;(1) <b>英语学科必须重视</b></div><div class="basics">从基础做起，稳稳扎实，<span class="redt">英语3500词</span></div></div></div>
  <div class="trow"><div class="tnum clr-acc">7</div><div class="thumb sel" id="t7"></div></div>
  <div class="trow"><div class="tnum">8</div><div class="thumb"></div></div>
  <div class="pscroll"></div>
 </div>
 <div class="d-flex justify-content-center pt-2 mt-1"><svg class="ic" viewBox="0 0 18 18"><path d="M9 1.500v14M2 8.500h14" stroke-width="1.800"/></svg></div>
</aside>

<section class="canvas">
 <div class="stage">
  <div class="aibtn"><svg class="ic"><use href="#wpsai"/></svg></div>
  <div class="slidepage"><div class="slidebody" id="body7"><div class="bigtitle">进步光荣榜</div><table class="gtable t1" id="t1"></table><table class="gtable t2" id="t2"></table></div></div>
  <div class="guide"></div>
  <i class="knob k1"></i><i class="knob k2"></i><i class="knob k3"></i><i class="knob k4"></i><i class="knob k5"></i><i class="knob k6"></i>
  <div class="cscroll"><svg viewBox="0 0 12 833"><path d="M3 11l3-5 3 5zM3 787l3 5 3-5zM3 803l3-4 3 4zM3 808l3-4 3 4zM3 817l3 4 3-4zM3 822l3 4 3-4z"/><rect x="2" y="304" width="8" height="48" rx="3" fill="#c3c6ca"/></svg></div>
 </div>
 <div class="notes d-flex align-items-center">单击此处添加备注<div class="aispeech d-flex align-items-center text-nowrap"><svg class="ic s15" viewBox="0 0 18 18"><path d="M8 14H2l2-3V2h11v7M6 5h7M6 8h5"/><path d="M13 10l1 2.500 2.500 1-2.500 1-1 2.500-1-2.500-2.500-1 2.500-1z" stroke="#9a66f0"/></svg>AI 演讲稿</div></div>
</section>

<aside class="assist">
 <div class="ahead d-flex align-items-center"><span>美化助手</span><svg class="chev ms-2"><use href="#cv"/></svg>
  <div class="d-flex ms-auto"><div class="slot w28"><svg class="ic" viewBox="0 0 18 18"><path d="M4 12V7c0-7 10-7 10 0v6c0 2-1 3-3 3M4 7C0 7 0 12 4 12M14 7c4 0 4 5 0 5"/></svg></div><div class="slot w28"><svg class="ic" viewBox="0 0 18 18"><path d="M7.500 1.500h3l.7 2 2 1.100 2.100-.4 1.500 2.600-1.400 1.600v1.200l1.400 1.600-1.500 2.600-2.100-.4-2 1.100-.7 2h-3l-.7-2-2-1.100-2.100.4-1.500-2.600 1.400-1.600V8.400L1.200 6.800l1.500-2.600 2.100.4 2-1.100z"/><circle cx="9" cy="9" r="2"/></svg></div><div class="slot w28"><svg class="ic" viewBox="0 0 18 18"><path d="M10 2l6 6-3 1-2 5-7-7 5-2zM7 11l-5 5"/></svg></div><div class="slot w28"><svg class="ic" viewBox="0 0 18 18"><path d="M4 4l10 10M14 4L4 14"/></svg></div></div></div>
 <div class="tip d-flex align-items-center"><svg class="ic" viewBox="0 0 18 18"><path d="M6 13c0-2-2-3-2-6 0-7 10-7 10 0 0 3-2 4-2 6zM6 16h6M9.500 5L8 8h2.500L9 11"/></svg>新用户特惠，超级会员月均价低至8.6元</div>
 <div class="warnline d-flex align-items-center fw-bold text-nowrap"><svg width="15" height="14" viewBox="0 0 15 14"><path d="M7.500 0L15 13.500H0z" fill="#e5641a"/><path d="M7.500 4v5M7.500 10.500v1.500" stroke="#fff" stroke-width="1.500"/></svg><span><span class="blue">2 个</span>文档字体缺失，建议下载替换</span></div>
 <div class="pv"><div class="q">➢问题一：学习方法不当，效率低下</div><div class="b">● 自习课<em>（晚自习+周六自主自习）</em>学习效率低下；</div><div class="p one">即便投入了<u>大量的时间和精力</u>，<u>学习效果却并不显著</u>。</div><div class="b">● 机械学习与盲目做题：</div><div class="p">部分同学陷入了机械地重复课本内容或盲目做题的循环中。他们可能只是在表面上<br>完成了学习任务，<u>没有深入理解和掌握知识</u>。真正的理解不仅仅是记忆知识点，更<br>是要把握知识的本质和规律。<u>（自买习题）</u></div></div>
 <div class="morebtn d-flex align-items-center justify-content-center">预览更多页面</div>
 <div class="fontcard"><div class="fr"><input class="form-check-input ck" type="checkbox" checked>全选缺失字体 (2)</div><div class="fr"><input class="form-check-input ck" type="checkbox" checked><span class="kai">柳公权楷书</span></div><div class="fr hei"><input class="form-check-input ck" type="checkbox" checked>汉仪旗黑-60简</div></div>
 <div class="dlbtn d-flex align-items-center justify-content-center">下载字体<span class="viptag">VIP</span></div>
 <div class="autodl d-flex align-items-center"><input class="form-check-input ck" type="checkbox">自动下载已匹配字体<span class="viptag">VIP</span></div>
</aside>

<nav class="rail">
 <div class="slot railtop"><svg class="ic" viewBox="0 0 18 18"><path d="M2 9h14" stroke="#999" stroke-width="2"/></svg></div>
 <div class="railitem"><svg class="ic" viewBox="0 0 18 18"><circle cx="6" cy="5" r="2.500"/><circle cx="12" cy="13" r="2.500"/><path d="M1 5h2.500M8.500 5H17M1 13h8.500M14.500 13H17"/></svg>属性</div>
 <div class="railitem"><svg class="ic"><use href="#star"/></svg>动画</div>
 <div class="railitem"><svg class="ic" viewBox="0 0 18 18"><path d="M6 10H1.500V1.500h10V5M7.500 5.500h9.500v8H7.500zM2 12c0 3 2 3.500 5 3.500M5 13l2.500 2.500L5 18"/></svg>切换</div>
 <div class="railitem on"><svg class="ic" viewBox="0 0 18 18"><path d="M5 3L3 5l11 12 2.500-2zM7.500 8L9.500 6M4 9l2 2-2 2-2-2zM12 4l3-2 1 3-2 2z"/><circle cx="5" cy="14" r="1"/></svg>美化</div>
 <div class="railitem"><svg class="ic"><use href="#shirt"/></svg>主题</div>
 <div class="railitem"><svg class="ic" viewBox="0 0 18 18"><path d="M6 15.500H3V8C0 7 1 2 4 2h10c3 0 4 5 1 5M8 13c0 3 1 3.500 3 3.500 0-3-1-4-3-3.500zM11 16c-1-4 0-7 2-9 1 4 1 6-2 9zM13 16c0-3 1-5 4-6 0 4-1 6-4 6z"/></svg>素材</div>
 <div class="railitem"><svg class="ic" viewBox="0 0 18 18"><path d="M9 3.500C7 2 4 2 1.500 2v13c2 0 4 0 5 1M9 3.500C11 2 14 2 16.500 2v6M9 3.500V8"/><circle cx="12" cy="12" r="3.200"/><path d="M14.500 14.500L17 17"/></svg>文库</div>
 <div class="railitem"><svg class="ic" viewBox="0 0 18 18"><circle cx="9" cy="9" r="8"/><path d="M6.500 7c0-4 5-3.500 5-.5 0 2-2.500 2-2.500 4.500M9 12.500V14"/></svg>帮助</div>
 <div class="railitem"><svg class="ic"><use href="#comment"/></svg>批注</div>
 <div class="railitem"><svg class="ic" viewBox="0 0 18 18"><circle cx="2.500" cy="9" r="1.600"/><circle cx="9" cy="9" r="1.600"/><circle cx="15.500" cy="9" r="1.600"/></svg>设置</div>
</nav>
</main>
<svg class="thermo" viewBox="0 0 16 57"><path d="M6 44V5a3 3 0 016 0v39a6 6 0 11-6 0z" fill="#5d6b78" stroke="#3f4d59"/><path d="M9 15v34" stroke="#e2501a" stroke-width="2"/><circle cx="9" cy="49.500" r="4.500" fill="#e87a12"/></svg>

<footer>
<div class="statusb d-flex align-items-center text-nowrap">
 <div class="slot st sb-page">幻灯片 7 / 16</div><div class="vsep"></div>
 <div class="slot st sb-theme"><svg class="ic s17"><use href="#shirt"/></svg>Office 主题</div><div class="vsep"></div>
 <div class="slot st sb-proof"><svg class="ic s17" viewBox="0 0 18 18"><path d="M7 16.500H3v-15h11V7M5.500 5l1.500 1.500L10 4"/><circle cx="11.500" cy="11.500" r="3"/><path d="M13.500 14l2 2.500"/></svg>校对</div><div class="vsep"></div>
 <div class="slot st sb-miss"><svg width="13" height="12" viewBox="0 0 13 12"><path d="M6.500 0L13 12H0z" fill="#f0b23c"/><path d="M6.500 4v4M6.500 9v1.500" stroke="#7a3c00" stroke-width="1.300"/></svg>缺失字体</div>
 <div class="sb-right d-flex align-items-center ms-auto">
  <div class="slot st sb-smart"><svg class="ic" viewBox="0 0 18 18"><path d="M5.500 6h7c3 0 3 3.500 2 5.500-1 5.500-10 5.500-11 0-1-2-1-5.500 2-5.500zM6 5c0-3.500 6-3.500 6 0M4 9h5"/></svg>智能美化<svg class="chev"><use href="#cv"/></svg></div><div class="vsep"></div>
  <div class="slot st sb-notes"><svg class="ic" viewBox="0 0 18 18"><path d="M2 3h7M2 9h13M2 15h13M11 2l2.500 2.500L16 2"/></svg>备注<svg class="chev ms-1"><use href="#cv"/></svg></div>
  <div class="slot st sb-cmt"><svg class="ic" viewBox="0 0 18 18"><path d="M8 13H5.500L2 16V3h13v6M13 11v6M10 14h6"/></svg>批注</div><div class="vsep"></div>
  <div class="slot sb-view"><svg class="ic s16" viewBox="0 0 18 18"><path d="M2 3h14v12H2zM6.500 3v12"/></svg></div>
  <div class="slot w38"><svg class="ic s16" viewBox="0 0 18 18"><path d="M2 2.500h5v5H2zM11 2.500h5v5h-5zM2 11.500h5v5H2zM11 11.500h5v5h-5z"/></svg></div><div class="slot w28"><svg class="ic s16" viewBox="0 0 18 18"><path d="M9 4C7 2.500 5 2.500 2.500 2.500V14C5 14 7 14 9 16c2-2 4-2 6.500-2V2.500C13 2.500 11 2.500 9 4zM9 4v12"/></svg></div><div class="vsep ms-1"></div>
  <div class="slot sb-play"><svg width="8" height="9" viewBox="0 0 8 9"><path d="M1 0l7 4.500L1 9z" fill="#fff"/></svg></div><svg class="chev ms-2"><use href="#cv"/></svg><div class="vsep sb-fitsep"></div>
  <div class="slot w40"><svg class="ic s16" viewBox="0 0 18 18"><path d="M5 1.500H2V5M13 1.500h3V5M5 16.500H2V13M13 16.500h3V13M5.500 5.500h7v7h-7z"/></svg></div><div class="slot st sb-pct">94%</div><svg class="chev"><use href="#cv"/></svg>
  <div class="slot sb-minus"><svg width="12" height="2"><rect width="12" height="2" fill="#333"/></svg></div>
  <svg width="107" height="12" viewBox="0 0 107 12"><path d="M0 6h50" stroke="#1f62d0" stroke-width="2"/><path d="M50 6h57" stroke="#b8bbc0" stroke-width="2"/><circle cx="49" cy="5.500" r="5" fill="#fff" stroke="#ccc"/><circle cx="49" cy="5.500" r="2.300" fill="#8a8a8a"/></svg>
  <div class="slot w38"><svg width="11" height="11"><path d="M5.500 0v11M0 5.500h11" stroke="#333" stroke-width="2"/></svg></div>
 </div>
</div>
<div class="taskbar d-flex align-items-center">
 <div class="slot w48"><svg width="16" height="16" viewBox="0 0 16 16"><path d="M0 2.300L6.500 1.400v6.100H0zM7.300 1.300L16 0v7.500H7.300zM0 8.300h6.500v6.200L0 13.600zM7.300 8.300H16V16l-8.700-1.300z"/></svg></div>
 <div class="searchbox d-flex align-items-center"><svg class="ic" viewBox="0 0 18 18"><circle cx="11" cy="7" r="5.500"/><path d="M7 11l-5.500 6"/></svg><span>搜索</span>
  <svg class="spark" width="62" height="28" viewBox="0 0 62 28"><path d="M24 2c1.500 7 5 10.500 12 12-7 1.500-10.500 5-12 12-1.500-7-5-10.500-12-12 7-1.500 10.500-5 12-12z" fill="#fbb81e" stroke="#fbb81e" stroke-width="1.500" stroke-linejoin="round"/><path d="M47 12c1 3.500 2.500 5 6 6-3.500 1-5 2.500-6 6-1-3.500-2.500-5-6-6 3.500-1 5-2.500 6-6z" fill="#fdc84a"/><path d="M5 18c.500 2.500 2 3.500 4 4-2 .5-3.500 2-4 4.500-.500-2.500-2-3.500-4-4 2-.5 3.500-2 4-4.500z" fill="#1b95e8"/><circle cx="41" cy="3.500" r="2" fill="#e8572a"/><circle cx="59" cy="24" r="2" fill="#7db843"/></svg></div>
 <div class="tb"><svg class="tview" viewBox="0 0 18 18"><path d="M1 1v2.500h10V1M1 17v-2.500h10V17M1 5.500h10v7H1zM15 1v3M15 8v9"/><path d="M13.800 5.500h2.500" stroke-width="2"/></svg></div>
 <div class="tb edge"><svg viewBox="0 0 26 26"><circle cx="13" cy="13" r="12" fill="#1377d0"/><path d="M1 12C2 5 7 1 13 1c8 0 12 5 12 10 0 4-3 6-7 6-3 0-4-1-3-3C16 9 8 6 1 12z" fill="#2fc5b5"/><path d="M8 13c-1 6 4 11 12 9-6 5-16 3-18-6 0-3 3-6 7-6z" fill="#0d5cae"/><path d="M11 12c0 5 3 8 10 7 2-1 3-2 3-1-2 3-5 4-8 4-5 0-8-5-5-10z" fill="#eef"/></svg></div>
 <div class="tb run"><svg viewBox="0 0 26 26"><path d="M2 3h9l2 3h10v17H2z" fill="#e9a51c"/><path d="M2 8h22v15H2z" fill="#fcd55f"/><path d="M6 24v-8h14v8h-4v-4h-6v4z" fill="#2b86d8"/></svg></div>
 <div class="tb"><svg viewBox="0 0 26 26"><path d="M8 5l9-4 8 6v16H8z" fill="#1b86dd"/><path d="M8 13l9 5 8-6v12H8z" fill="#4ab6f2"/><rect x="1" y="7" width="14" height="14" rx="1.500" fill="#0c5fb8"/><circle cx="8" cy="14" r="3.500" fill="none" stroke="#fff" stroke-width="2"/></svg></div>
 <div class="tb run cur2"><svg viewBox="0 0 26 26"><path d="M1 6h6.500M3 6l5.500 14L13 9l4.500 11L23.500 6H13" fill="none" stroke="#e3321e" stroke-width="3.400"/></svg></div>
 <div class="tb run"><svg viewBox="0 0 26 26"><ellipse cx="13" cy="13" rx="11.500" ry="12" fill="#f0f6e2"/><path d="M19 18c-3 5-11 4-12-4-.500-8 11-10 12-1H8" fill="none" stroke="#43b51e" stroke-width="3.600"/><path d="M4 20C8 12 15 4 23 3" stroke="#8ad13c" stroke-width="2" fill="none"/></svg></div>
 <div class="tb run"><svg viewBox="0 0 26 26"><rect x="1" y="1" width="24" height="24" rx="5" fill="#fff"/><path d="M13 3c5 0 6 5 6 9l2 5-2 1c-1 6-11 6-12 0l-2-1 2-5c0-4 1-9 6-9z" fill="#111"/><ellipse cx="13" cy="17" rx="4" ry="5" fill="#fff"/><circle cx="11" cy="7" r="1.400" fill="#fff"/><circle cx="15" cy="7" r="1.400" fill="#fff"/><path d="M10 10h6l-3 2zM8 22h4v2H8zM14 22h4v2h-4z" fill="#f7a81b"/><path d="M7 12c4 2 8 2 12 0v2c-4 2-8 2-12 0z" fill="#e5261f"/></svg></div>
 <div class="tray d-flex align-items-center ms-auto">
  <svg width="24" height="24" viewBox="0 0 24 24"><circle cx="11" cy="11" r="10" fill="#0b8ed0" stroke="#fff" stroke-width="1.500"/><path d="M8 8c0-5 7-4 7 0 0 2.500-3.500 3-3.500 6M11.500 16v2" stroke="#fff" stroke-width="2" fill="none"/><circle cx="18.500" cy="17.500" r="5" fill="#f2a51e"/><path d="M18.500 15v5" stroke="#fff" stroke-width="1.500"/></svg>
  <svg class="drink" width="26" height="30" viewBox="0 0 26 30"><circle cx="7" cy="8" r="6" fill="#ffc23d"/><path d="M17 12l2-8 6-2" stroke="#f26b7e" stroke-width="2" fill="none"/><path d="M6 9h15l-1 20H7z" fill="#a9e3cf"/><path d="M8 14h11l-.5 13h-10z" fill="#13d9b5"/></svg>
  <span class="drink-t">喝口水</span>
  <div class="d-flex align-items-center ms-auto"><svg class="ic" viewBox="0 0 18 18"><path d="M3 12l6-6 6 6" stroke="#111" stroke-width="1.500"/></svg>
  <svg class="ic ime" viewBox="0 0 18 18"><path d="M2 3.500L16 1.500V9M2 3.500V16h7M6 11V7.500L10 6M12 5l-1 3M6 13h3"/><circle cx="14" cy="14" r="4" fill="#2c73c4" stroke="none"/></svg>
  <span class="ime-zh">中</span>
  <div class="clock text-center">10:24<br>2025/9/9</div>
  <svg class="notif" width="28" height="28" viewBox="0 0 28 28"><path d="M1 4h16v13H11l-4 4v-4H1z"/><path d="M4 8h10M4 11h10M4 14h7" stroke="#dde" stroke-width="1.200"/><circle cx="16" cy="18" r="8" fill="#d8dde0" stroke="#777"/><path d="M13.500 15.500l3-2V23" fill="none" stroke="#111" stroke-width="1.600"/></svg>
  <div class="peek"></div></div>
 </div>
</div>
</footer>
<script>
const left=[['夏子涵',287,55],['孙翊宸',232,58],['邱林昊',231,56],['李皓月',230,56],['陈宇轩',192,56],['郭姝秀',181,52],['刘怡林',181,56],['黄兴宇',124,51],['陈瀚泽',118,49],['耿方浩',116,51],['王旻昊',105,51]];
t1.innerHTML='<thead><tr><th>姓名</th><th>进步名次</th></tr></thead><tbody>'+left.map(r=>`<tr style="height:${r[2]}px"><td>${r[0]}</td><td class="num">${r[1]}</td></tr>`).join('')+'</tbody>';
const right=[['闫娅淇',98,'袁来',13,70],['王梦金',95,'杨雅荀',11,72],['耿晨曦',92,'王冠森',9,71],['王静一',81,'','',46],['胡铭楷',68,'','',46],['杜宜宸',60,'','',45],['田瀚文',48,'','',46],['丁钰涵',45,'','',46],['王梦炀',34,'','',45],['张涵硕',33,'','',48]];
t2.innerHTML='<thead><tr><th>姓名</th><th>进步名次</th><th>姓名</th><th>进步名次</th></tr></thead><tbody>'+right.map(r=>`<tr style="height:${r[4]}px"><td>${r[0]}</td><td class="num">${r[1]}</td><td>${r[2]}</td><td class="num">${r[3]}</td></tr>`).join('')+'</tbody>';
m5.insertAdjacentHTML('afterbegin',['姓名|语文|数学|英语|语数外总分','夏子涵||||318','孙翊宸||||314.5','耿方浩||||314','陈宇轩||||310','闫娅淇||||308.5','王梦金||||306','吴昊泽||||302','孙翊宸||||301','郭姝秀||||301','夏子涵||||300'].map(l=>'<div class="r">'+l.split('|').map(c=>`<span>${c}</span>`).join('')+'</div>').join(''));
const mini=body7.cloneNode(true);
mini.style.transform=`scale(${193/1207})`;mini.style.transformOrigin='0 0';
t7.append(mini);
</script>
</body>
</html>
